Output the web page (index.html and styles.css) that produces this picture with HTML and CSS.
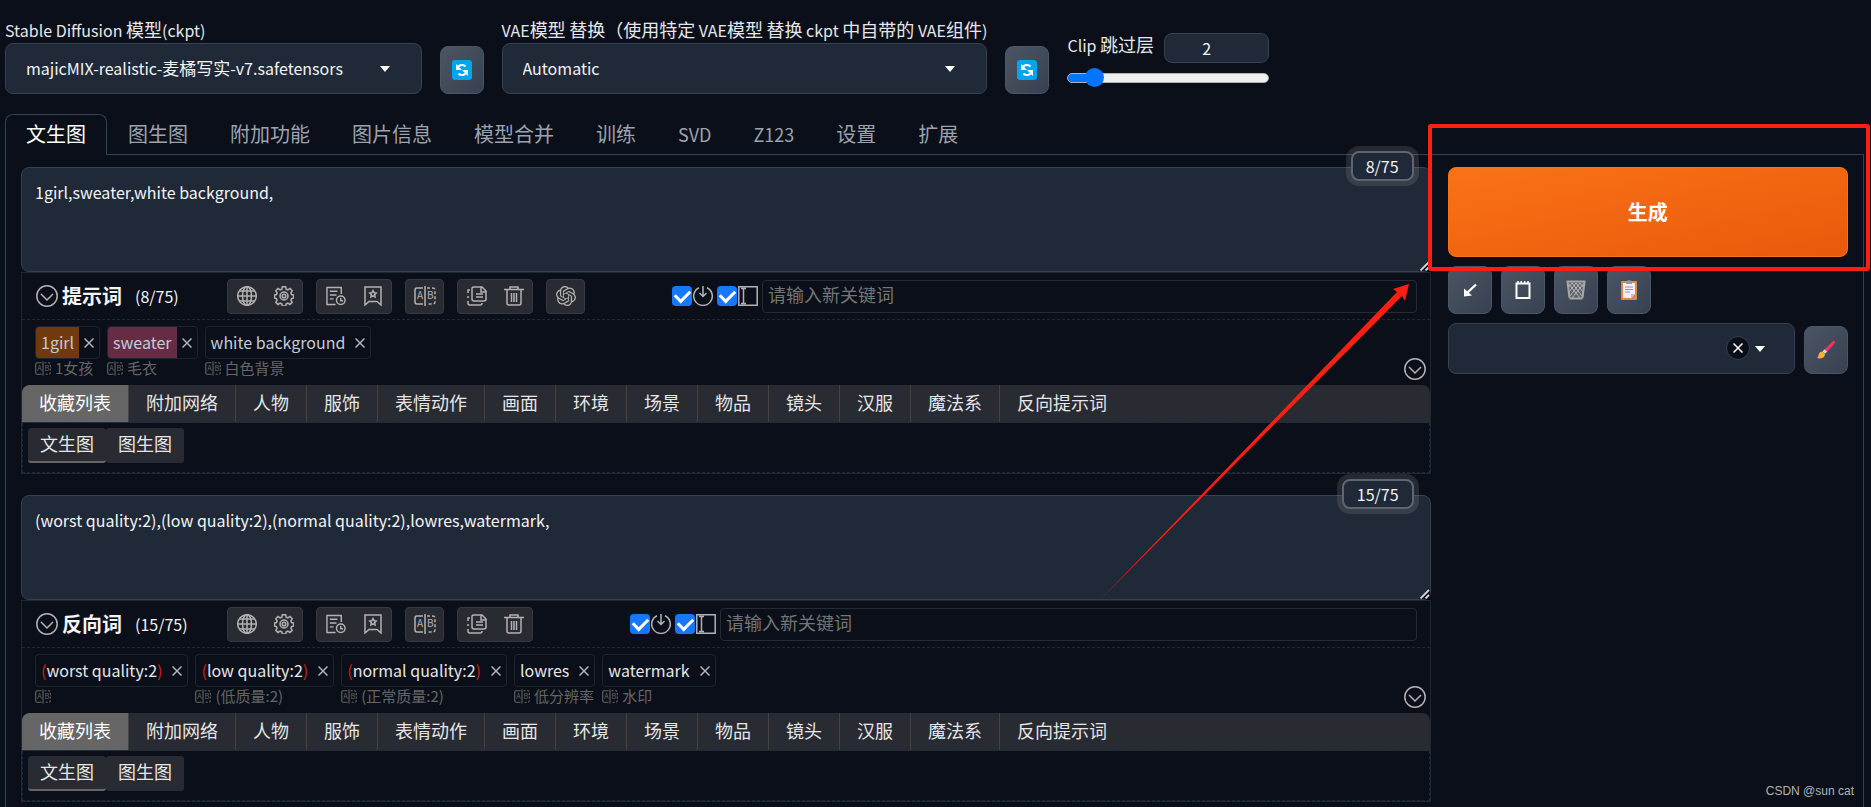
FILE: index.html
```html
<!DOCTYPE html>
<html lang="zh-CN">
<head>
<meta charset="utf-8">
<title>Stable Diffusion</title>
<link rel="stylesheet" href="styles.css">
</head>
<body>
<svg class="defs" aria-hidden="true">
  <symbol id="caret" viewBox="0 0 10 6"><path d="M0 0h10L5 6z" fill="#fff"/></symbol>
  <symbol id="refresh" viewBox="0 0 20 20"><rect width="20" height="20" rx="3" fill="#00a4ef"/><path d="M5 9.500A5 5 0 0 1 13.500 6.500M15 10.500A5 5 0 0 1 6.500 13.500" fill="none" stroke="#fff" stroke-width="2.200"/><path d="M4 4v6h6zM16 16v-6h-6z" fill="#fff"/></symbol>
  <symbol id="fold" viewBox="0 0 22 22"><circle cx="11" cy="11" r="10.200"/><path d="M5 9l6 6 6-6"/></symbol>
  <symbol id="globe" viewBox="0 0 20 20"><circle cx="10" cy="10" r="9.300"/><ellipse cx="10" cy="10" rx="4.500" ry="9.300"/><path d="M10 .7v18.600M.7 10h18.600M2.300 5h15.400M2.300 15h15.400"/></symbol>
  <symbol id="gear" viewBox="0 0 20 20"><path d="M8.300.8h3.400l.5 2.400 1.700.7 2.100-1.400 2.200 2.300-1.300 2 .7 1.700 2 .5v3l-2 .6-.7 1.600 1.300 2.100-2.300 2.200-2-1.300-1.700.7-.5 2H8.300l-.5-2-1.700-.7-2.100 1.300-2.200-2.200 1.300-2.100-.7-1.600-1.900-.6V9l1.900-.5.7-1.700-1.300-2L4 2.500l2.100 1.400 1.700-.7z"/><circle cx="10" cy="10" r="4"/><circle cx="10" cy="10" r="1.800"/></symbol>
  <symbol id="history" viewBox="0 0 21 20"><path d="M16 8V1H1v18h9M4 5h8M4 9h7M4 13h4"/><circle cx="15.500" cy="14.500" r="4.500"/><path d="M15.500 12v3h2.500"/></symbol>
  <symbol id="bookmark" viewBox="0 0 20 20"><path d="M2 1h16v18l-4-3.500h-8L2 19z"/><path d="M10 4.700l1 2 2.200.4-1.600 1.600.4 2.200-2-1-2 1 .4-2.200L6.800 7.100 9 6.700z"/></symbol>
  <symbol id="split" viewBox="0 0 22 20"><path d="M9 2H3a2 2 0 0 0-2 2v12a2 2 0 0 0 2 2h6M11 0v20"/><path d="M13 2h6a2 2 0 0 1 2 2v12a2 2 0 0 1-2 2h-6" stroke-dasharray="3 2"/></symbol>
  <symbol id="copy" viewBox="0 0 20 20"><path d="M6 1h9l4 4v8a2 2 0 0 1-2 2H7a2 2 0 0 1-2-2V2zM14 1v5h5M9 8h7M9 11h7"/><path d="M3 4H1v3M1 10v2M1 15v2q0 2 2 2h10q2 0 2-2"/></symbol>
  <symbol id="trash" viewBox="0 0 20 20"><path d="M0 3.500h20M6 3V1h8v2M3 4v13q0 2 2 2h10q2 0 2-2V4M7.500 7v9M10 7v9M12.500 7v9"/></symbol>
  <symbol id="knot" viewBox="0 0 24 24"><path d="M22.2819 9.8211a5.9847 5.9847 0 0 0-.5157-4.9108 6.0462 6.0462 0 0 0-6.5098-2.9A6.0651 6.0651 0 0 0 4.9807 4.1818a5.9847 5.9847 0 0 0-3.9977 2.9 6.0462 6.0462 0 0 0 .7427 7.0966 5.98 5.98 0 0 0 .511 4.9107 6.051 6.051 0 0 0 6.5146 2.9001A5.9847 5.9847 0 0 0 13.2599 24a6.0557 6.0557 0 0 0 5.7718-4.2058 5.9894 5.9894 0 0 0 3.9977-2.9001 6.0557 6.0557 0 0 0-.7475-7.0729zm-9.022 12.6081a4.4755 4.4755 0 0 1-2.8764-1.0408l.1419-.0804 4.7783-2.7582a.7948.7948 0 0 0 .3927-.6813v-6.7369l2.02 1.1686a.071.071 0 0 1 .038.0615v5.5826a4.504 4.504 0 0 1-4.4945 4.4944zm-9.6607-4.1254a4.4708 4.4708 0 0 1-.5346-3.0137l.142.0852 4.783 2.7582a.7712.7712 0 0 0 .7806 0l5.8428-3.3685v2.3324a.0804.0804 0 0 1-.0332.0615L9.74 19.9502a4.4992 4.4992 0 0 1-6.1408-1.6464zM2.3408 7.8956a4.485 4.485 0 0 1 2.3655-1.9728V11.6a.7664.7664 0 0 0 .3879.6765l5.8144 3.3543-2.0201 1.1685a.0757.0757 0 0 1-.071 0l-4.8303-2.7865A4.504 4.504 0 0 1 2.3408 7.872zm16.5963 3.8558L13.1038 8.364 15.1192 7.2a.0757.0757 0 0 1 .071 0l4.8303 2.7913a4.4944 4.4944 0 0 1-.6765 8.1042v-5.6772a.79.79 0 0 0-.407-.667zm2.0107-3.0231l-.142-.0852-4.7735-2.7818a.7759.7759 0 0 0-.7854 0L9.409 9.2297V6.8974a.0662.0662 0 0 1 .0284-.0615l4.8303-2.7866a4.4992 4.4992 0 0 1 6.6802 4.66zM8.3065 12.863l-2.02-1.1638a.0804.0804 0 0 1-.038-.0567V6.0742a4.4992 4.4992 0 0 1 7.3757-3.4537l-.142.0805L8.704 5.459a.7948.7948 0 0 0-.3927.6813zm1.0976-2.3654l2.602-1.4998 2.6069 1.4998v2.9994l-2.5974 1.4997-2.6067-1.4997Z" fill="#b3b3b3" stroke="none"/></symbol>
  <symbol id="enter" viewBox="0 0 20 20"><path d="M6 1.700A9.300 9.300 0 1 0 14 1.700M10 0v10M6.500 7l3.500 3.500L13.500 7" /></symbol>
  <symbol id="cursor" viewBox="0 0 20 20"><path d="M.8.8h18.400v18.400H.8zM3 2.500h5M3 17.500h5M5.500 2.500v15"/></symbol>
  <symbol id="cross" viewBox="0 0 10 10"><path d="M.5.5l9 9M9.500.5l-9 9"/></symbol>
  <symbol id="grip" viewBox="0 0 12 12"><path d="M1 12L12 1v11z" fill="#0b0f19"/><path d="M2.500 11.500l8.500-8.500M7.500 11.500L11 8" stroke="#d8d8d8" stroke-width="1.800" fill="none"/></symbol>
</svg>

<div class="page">
  <header class="quick">
    <div class="field">
      <label for="ckpt">Stable Diffusion <span class="han">模型</span>(ckpt)</label>
      <div class="pick"><button type="button" id="ckpt" class="picker">majicMIX-realistic-<span class="han">麦橘写实</span>-v7.safetensors</button><svg class="caret"><use href="#caret"/></svg></div>
    </div>
    <button class="tool" aria-label="刷新模型"><svg class="i20"><use href="#refresh"/></svg></button>
    <div class="field">
      <label for="vae">VAE<span class="han">模型</span> <span class="han">替换（使用特定</span> VAE<span class="han">模型</span> <span class="han">替换</span> ckpt <span class="han">中自带的</span> VAE<span class="han">组件</span>)</label>
      <div class="pick"><select id="vae" class="picker"><option>Automatic</option></select><svg class="caret"><use href="#caret"/></svg></div>
    </div>
    <button class="tool" aria-label="刷新 VAE"><svg class="i20"><use href="#refresh"/></svg></button>
    <div class="clip">
      <div class="clip-head"><label for="clip">Clip <span class="han">跳过层</span></label><input id="clip" class="clip-num" type="text" inputmode="numeric" value="2"></div>
      <input class="slider" type="range" min="1" max="12" value="2" aria-label="Clip 跳过层">
    </div>
  </header>

  <nav class="tabs">
    <button class="tab active">文生图</button><button class="tab">图生图</button><button class="tab">附加功能</button><button class="tab">图片信息</button><button class="tab">模型合并</button><button class="tab">训练</button><button class="tab latin">SVD</button><button class="tab latin">Z123</button><button class="tab">设置</button><button class="tab">扩展</button>
  </nav>

  <main class="panel">
    <div class="prompts">
      <section class="prompt">
        <div class="box">
          <textarea aria-label="提示词">1girl,sweater,white background,</textarea>
          <svg class="grip"><use href="#grip"/></svg>
          <span class="count">8/75</span>
        </div>
        <div class="words">
          <div class="bar">
            <div class="title"><svg class="i22"><use href="#fold"/></svg><h2>提示词</h2><span>(8/75)</span></div>
            <div class="groups">
              <div class="group"><button aria-label="语言"><svg class="i20"><use href="#globe"/></svg></button><button aria-label="设置"><svg class="i20"><use href="#gear"/></svg></button></div>
              <div class="group"><button aria-label="历史"><svg class="i20"><use href="#history"/></svg></button><button aria-label="收藏"><svg class="i20"><use href="#bookmark"/></svg></button></div>
              <div class="group"><button aria-label="翻译"><svg class="i22" viewBox="0 0 22 20"><use href="#split"/><text x="3" y="13">A</text><text x="13" y="13">B</text></svg></button></div>
              <div class="group"><button aria-label="复制"><svg class="i20"><use href="#copy"/></svg></button><button aria-label="删除"><svg class="i20"><use href="#trash"/></svg></button></div>
              <div class="group"><button aria-label="ChatGPT"><svg class="i20"><use href="#knot"/></svg></button></div>
            </div>
            <div class="add">
              <label class="check"><input type="checkbox" checked aria-label="回车"><svg class="i20"><use href="#enter"/></svg></label>
              <label class="check"><input type="checkbox" checked aria-label="输入框"><svg class="i20"><use href="#cursor"/></svg></label>
              <input class="new" type="text" placeholder="请输入新关键词" aria-label="新关键词">
            </div>
          </div>
          <div class="tags">
            <div class="tag"><div class="chip"><span class="word brown">1girl</span><button aria-label="移除"><svg><use href="#cross"/></svg></button></div><div class="trans"><svg viewBox="0 0 22 20"><use href="#split"/><text x="3" y="13">A</text><text x="13" y="13">B</text></svg>1女孩</div></div>
            <div class="tag"><div class="chip"><span class="word wine">sweater</span><button aria-label="移除"><svg><use href="#cross"/></svg></button></div><div class="trans"><svg viewBox="0 0 22 20"><use href="#split"/><text x="3" y="13">A</text><text x="13" y="13">B</text></svg>毛衣</div></div>
            <div class="tag"><div class="chip"><span class="word blue">white background</span><button aria-label="移除"><svg><use href="#cross"/></svg></button></div><div class="trans"><svg viewBox="0 0 22 20"><use href="#split"/><text x="3" y="13">A</text><text x="13" y="13">B</text></svg>白色背景</div></div>
            <button class="more" aria-label="展开"><svg class="i22"><use href="#fold"/></svg></button>
          </div>
          <div class="cats"><button class="on">收藏列表</button><button>附加网络</button><button>人物</button><button>服饰</button><button>表情动作</button><button>画面</button><button>环境</button><button>场景</button><button>物品</button><button>镜头</button><button>汉服</button><button>魔法系</button><button>反向提示词</button></div>
          <div class="subs"><button class="on">文生图</button><button>图生图</button></div>
        </div>
      </section>

      <section class="prompt negative">
        <div class="box">
          <textarea aria-label="反向词">(worst quality:2),(low quality:2),(normal quality:2),lowres,watermark,</textarea>
          <svg class="grip"><use href="#grip"/></svg>
          <span class="count">15/75</span>
        </div>
        <div class="words">
          <div class="bar">
            <div class="title"><svg class="i22"><use href="#fold"/></svg><h2>反向词</h2><span>(15/75)</span></div>
            <div class="groups">
              <div class="group"><button aria-label="语言"><svg class="i20"><use href="#globe"/></svg></button><button aria-label="设置"><svg class="i20"><use href="#gear"/></svg></button></div>
              <div class="group"><button aria-label="历史"><svg class="i20"><use href="#history"/></svg></button><button aria-label="收藏"><svg class="i20"><use href="#bookmark"/></svg></button></div>
              <div class="group"><button aria-label="翻译"><svg class="i22" viewBox="0 0 22 20"><use href="#split"/><text x="3" y="13">A</text><text x="13" y="13">B</text></svg></button></div>
              <div class="group"><button aria-label="复制"><svg class="i20"><use href="#copy"/></svg></button><button aria-label="删除"><svg class="i20"><use href="#trash"/></svg></button></div>
            </div>
            <div class="add">
              <label class="check"><input type="checkbox" checked aria-label="回车"><svg class="i20"><use href="#enter"/></svg></label>
              <label class="check"><input type="checkbox" checked aria-label="输入框"><svg class="i20"><use href="#cursor"/></svg></label>
              <input class="new" type="text" placeholder="请输入新关键词" aria-label="新关键词">
            </div>
          </div>
          <div class="tags">
            <div class="tag"><div class="chip"><span class="word"><b>(</b>worst quality:2<b>)</b></span><button aria-label="移除"><svg><use href="#cross"/></svg></button></div><div class="trans"><svg viewBox="0 0 22 20"><use href="#split"/><text x="3" y="13">A</text><text x="13" y="13">B</text></svg></div></div>
            <div class="tag"><div class="chip"><span class="word"><b>(</b>low quality:2<b>)</b></span><button aria-label="移除"><svg><use href="#cross"/></svg></button></div><div class="trans"><svg viewBox="0 0 22 20"><use href="#split"/><text x="3" y="13">A</text><text x="13" y="13">B</text></svg>(低质量:2)</div></div>
            <div class="tag"><div class="chip"><span class="word"><b>(</b>normal quality:2<b>)</b></span><button aria-label="移除"><svg><use href="#cross"/></svg></button></div><div class="trans"><svg viewBox="0 0 22 20"><use href="#split"/><text x="3" y="13">A</text><text x="13" y="13">B</text></svg>(正常质量:2)</div></div>
            <div class="tag"><div class="chip"><span class="word">lowres</span><button aria-label="移除"><svg><use href="#cross"/></svg></button></div><div class="trans"><svg viewBox="0 0 22 20"><use href="#split"/><text x="3" y="13">A</text><text x="13" y="13">B</text></svg>低分辨率</div></div>
            <div class="tag"><div class="chip"><span class="word">watermark</span><button aria-label="移除"><svg><use href="#cross"/></svg></button></div><div class="trans"><svg viewBox="0 0 22 20"><use href="#split"/><text x="3" y="13">A</text><text x="13" y="13">B</text></svg>水印</div></div>
            <button class="more" aria-label="展开"><svg class="i22"><use href="#fold"/></svg></button>
          </div>
          <div class="cats"><button class="on">收藏列表</button><button>附加网络</button><button>人物</button><button>服饰</button><button>表情动作</button><button>画面</button><button>环境</button><button>场景</button><button>物品</button><button>镜头</button><button>汉服</button><button>魔法系</button><button>反向提示词</button></div>
          <div class="subs"><button class="on">文生图</button><button>图生图</button></div>
        </div>
      </section>
    </div>

    <aside class="actions">
      <div class="run"><button class="generate">生成</button><span class="mark"></span></div>
      <div class="tools">
        <button class="tool" aria-label="读取参数"><svg class="i20" viewBox="0 0 20 20"><path d="M16 4.500L6 14" fill="none" stroke="#fff" stroke-width="2.400"/><path d="M4 16.500V8.500l8 7z" fill="#fff"/></svg></button>
        <button class="tool" aria-label="应用样式"><svg class="i20" viewBox="0 0 20 20"><path d="M3.500 3.500h13v14.500h-13z" fill="none" stroke="#fff" stroke-width="2"/><path d="M5 1v3M8.300 1v3M11.700 1v3M15 1v3" stroke="#fff" stroke-width="1.500"/></svg></button>
        <button class="tool" aria-label="清空提示词"><svg class="i20" viewBox="0 0 20 20"><path d="M1 1h18l-2.500 18h-13z" fill="#5d626b"/><path d="M2 3l12 15M6 3l10 13M10 3l7 9M14 3l4 5M18 3L6 18M14 3L4 16M10 3l-7 9M6 3L2 8" stroke="#bbb" stroke-width="1"/><path d="M.5 1.500h19M3.500 18.500h13M1.500 2l2 16M18.500 2l-2 16" stroke="#a5a5a5" stroke-width="2"/></svg></button>
        <button class="tool" aria-label="粘贴样式"><svg class="i20" viewBox="0 0 20 20"><rect x="2" y="1" width="16" height="19" rx="1" fill="#dc8c3c"/><path d="M4 3h12v11l-4 4H4z" fill="#f3eef8"/><path d="M12 18v-4h4z" fill="#c9bfd3"/><path d="M6 7h8M6 9.500h8M6 12h5" stroke="#9b93a5"/><path d="M7 1.500Q10-1 13 1.500V4H7z" fill="#9a9aa0"/></svg></button>
      </div>
      <div class="styles">
        <div class="pick"><select class="picker" aria-label="样式"><option></option></select><button class="clear" aria-label="清除"><svg><use href="#cross"/></svg></button><svg class="caret"><use href="#caret"/></svg></div>
        <button class="tool" aria-label="编辑样式"><svg class="i20" viewBox="0 0 20 20"><path d="M8.500 9.500L16.500 1.500q2-1.500 2.500 0t-.5 2L11 12z" fill="#f8315f"/><path d="M6.500 11.500l2-2.300 2.700 2.600-2.200 2z" fill="#d8d3dc"/><path d="M1 18q1.500-1 1.700-3.500Q3.500 11.500 6.500 11.500L9 14q0 4-5 4.500z" fill="#ffb02e"/></svg></button>
      </div>
    </aside>
  </main>

  <svg class="arrow" viewBox="0 0 312 318"><path d="M0 318L299 8 295 5 311 0 307 17 304 12z" fill="#ff1f12"/></svg>
  <div class="credit">CSDN @sun cat</div>
</div>
</body>
</html>
```
FILE: styles.css
```css
* { box-sizing: border-box; }

body {
  margin: 0;
  background: #0b0f19;
  color: #f3f4f6;
  font: 16px/24px "Noto Sans CJK SC", sans-serif;
  overflow: hidden;
}

button, input, select, textarea { font: inherit; color: inherit; margin: 0; }
button { padding: 0; border: 0; background: none; display: flex; align-items: center; justify-content: center; white-space: nowrap; }
svg { display: block; flex: none; }

.defs { position: absolute; width: 0; height: 0; }
.i20 { width: 20px; height: 20px; }
.i22 { width: 22px; height: 22px; }
.han { font-size: 18px; }

.page {
  position: relative;
  min-height: 100vh;
  padding: 17px 7px 0 5px;
  display: flex;
  flex-direction: column;
}

/* Top settings row */
.quick {
  display: grid;
  grid-template-columns: 423fr 44px 487fr 44px 197fr;
  column-gap: 18px;
  align-items: end;
  width: 68%;
}
.field label { display: block; height: 26px; line-height: 24px; white-space: nowrap; color: #e5e7eb; }
.pick { position: relative; }
.picker {
  display: block;
  width: 100%;
  height: 51px;
  padding: 0 20px 2px;
  text-align: left;
  border: 1px solid #374151;
  border-radius: 8px;
  background: #1f2937;
  appearance: none;
}
.picker .han { font-size: 17px; }
.caret { position: absolute; right: 32px; top: 23px; width: 10px; height: 6px; }
.tool {
  width: 44px;
  height: 48px;
  flex: none;
  border: 1px solid #4b5563;
  border-radius: 8px;
  background: linear-gradient(to bottom right, #4b5563, #374151);
}
.clip { align-self: start; padding-top: 16px; }
.clip-head { display: flex; justify-content: space-between; gap: 10px; height: 30px; }
.clip-head label { white-space: nowrap; line-height: 22px; color: #e5e7eb; }
.clip-num {
  width: 105px;
  height: 30px;
  padding: 0 20px 0 0;
  text-align: center;
  border: 1px solid #374151;
  border-radius: 8px;
  background: #1f2937;
}
.slider { display: block; width: 100%; height: 20px; margin-top: 5px; appearance: none; background: none; }
.slider::-webkit-slider-runnable-track {
  height: 10px;
  border: 1px solid #b2b2b2;
  border-radius: 5px;
  background: linear-gradient(to right, #0075ff 12%, #efefef 12%);
}
.slider::-webkit-slider-thumb { appearance: none; width: 19px; height: 19px; margin-top: -6px; border-radius: 50%; background: #0075ff; }

/* Main tabs */
.tabs { display: flex; margin-top: 20px; position: relative; }
.tab {
  height: 41px;
  padding: 0 20px 2px;
  border: 1px solid transparent;
  border-bottom: 0;
  border-radius: 8px 8px 0 0;
  color: #9ca3af;
  font-size: 20px;
}
.tab.latin { font-size: 18px; }
.tab.active { color: #fff; border-color: #374151; background: #0b0f19; }
.panel {
  flex: 1;
  display: grid;
  grid-template-columns: 352fr 100fr;
  gap: 17px;
  margin-top: -1px;
  padding: 12px 15px 4px;
  border: 1px solid #374151;
  border-bottom: 0;
}

/* Prompt boxes */
.prompts { display: flex; flex-direction: column; gap: 21px; min-width: 0; }
.box { position: relative; height: 105px; }
.box textarea {
  display: block;
  width: 100%;
  height: 105px;
  padding: 12px 13px;
  border: 1px solid #374151;
  border-radius: 8px;
  background: #1f2937;
  resize: none;
}
.grip { position: absolute; right: 1px; bottom: 1px; width: 12px; height: 12px; }
.count {
  position: absolute;
  right: 17px;
  top: -16px;
  padding: 0 13px;
  line-height: 26px;
  border: 2px solid #5f6670;
  border-radius: 8px;
  background: #1f2937;
  box-shadow: 0 0 0 5px rgba(192, 192, 192, 0.15);
}
.words { border: 1px solid #1f2733; }
.words svg { fill: none; stroke: #b3b3b3; stroke-width: 1.5; }
.words text { fill: #b3b3b3; stroke: none; font: 10px "Noto Sans CJK SC", sans-serif; }
.bar { display: flex; align-items: center; height: 47px; padding: 0 13px 0 14px; border-bottom: 1px dashed #1f2937; }
.title { display: flex; align-items: center; min-width: 191px; gap: 4px; }
.title h2 { margin: 0 9px 0 0; font-size: 20px; line-height: 24px; }
.groups { display: flex; gap: 13px; }
.group { display: flex; border: 1px solid #373942; border-radius: 4px; background: #292b33; }
.group button { width: 37px; height: 33px; }
.add { flex: 1; display: flex; align-items: center; gap: 4px; margin-left: 87px; }
.negative .add { margin-left: 97px; }
.check { display: flex; gap: 1px; }
.check input {
  appearance: none;
  width: 20px;
  height: 20px;
  border-radius: 4px;
  background: #1677ff;
  display: grid;
  place-items: center;
}
.check input:checked::before {
  content: "";
  width: 12px;
  height: 7px;
  border: solid #fff;
  border-width: 0 0 3px 3px;
  transform: rotate(-45deg) translate(1px, -1px);
}
.new {
  flex: 1;
  min-width: 0;
  height: 33px;
  padding: 0 5px 4px;
  font-size: 18px;
  border: 1px solid #252a34;
  border-radius: 4px;
  background: transparent;
}
.new::placeholder { color: #757575; }

.tags { position: relative; display: flex; gap: 7px; height: 65px; padding: 6px 13px 0; }
.tag { flex: none; }
.chip { display: flex; width: max-content; height: 33px; border: 1px solid #1f2530; border-radius: 4px; overflow: hidden; }
.word { padding: 0 5px; line-height: 30px; color: #e6e6e6; }
.word b { font-weight: 400; color: #d81e06; }
.brown { background: #703a0e; color: #c2cbdb; }
.wine { background: #652d43; color: #c2cbdb; }
.blue { color: #c2cbdb; }
.chip button { width: 20px; }
.chip svg, .clear svg { width: 10px; height: 10px; }
.trans { display: flex; align-items: center; gap: 4px; height: 18px; font-size: 15px; line-height: 18px; color: #666; }
.trans svg { width: 16px; height: 15px; stroke: #666; }
.trans text { fill: #666; }
.more { position: absolute; right: 4px; bottom: 5px; }

.cats { display: flex; height: 38px; border-radius: 8px 8px 0 0; background: #292b33; overflow: hidden; border-bottom: 1px dashed #1b2c3e; }
.cats button { padding: 0 17px 4px; font-size: 18px; color: #e6e6e6; border-right: 1px solid #42433f; }
.cats button:last-child { border-right: 0; }
.cats .on { background: #666; color: #fff; }
.subs { display: flex; align-items: flex-start; height: 50px; padding: 5px; border: 1px dashed #1b2c3e; border-top: 0; }
.subs button { height: 35px; padding: 0 12px 4px; font-size: 18px; color: #e6e6e6; border-radius: 3px; background: #292b33; border-bottom: 2px solid #292b33; }
.subs .on { border-bottom-color: #666; }

/* Right column */
.actions { min-width: 0; }
.run { position: relative; }
.generate {
  width: 100%;
  height: 90px;
  border: 1px solid #f97316;
  border-radius: 8px;
  background: linear-gradient(to bottom right, #f97316, #ea580c);
  color: #fff;
  font-size: 20px;
  font-weight: 700;
}
.mark { position: absolute; inset: -43px -22px -14px -20px; border: 4px solid #ff1f12; border-radius: 3px; z-index: 1; }
.tools { display: flex; gap: 9px; margin-top: 9px; }
.styles { display: flex; align-items: flex-end; gap: 9px; margin-top: 9px; }
.styles .pick { flex: 1; }
.styles .caret { right: 30px; }
.clear {
  position: absolute;
  right: 45px;
  top: 13px;
  width: 24px;
  height: 24px;
  border: 1px solid #374151;
  border-radius: 50%;
  background: #0b0f19;
}
.clear svg { fill: none; stroke: #fff; stroke-width: 1.5; }

/* Annotation and credit */
.arrow { position: absolute; left: 1098px; top: 284px; width: 312px; height: 318px; }
.credit { position: absolute; right: 17px; bottom: 6px; font: 12px/20px "Liberation Sans", Arial, sans-serif; color: #b0b2b6; }
```
